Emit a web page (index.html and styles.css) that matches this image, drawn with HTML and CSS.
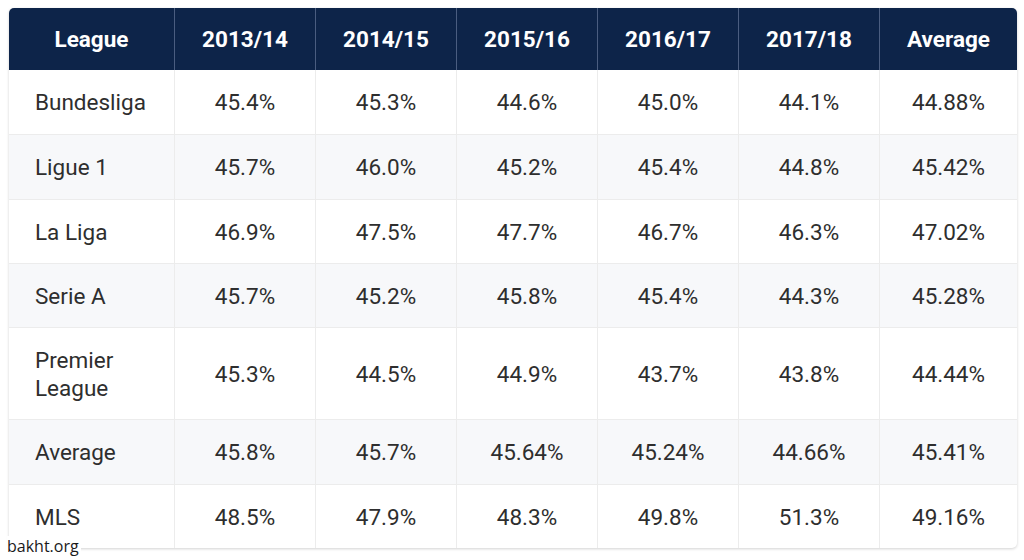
FILE: index.html
```html
<!DOCTYPE html>
<html>
<head>
<meta charset="utf-8">
<link rel="stylesheet" href="styles.css">
</head>
<body>
<div class="page">
  <table class="stats">
    <colgroup>
      <col class="c-league"><col class="c-year"><col class="c-year"><col class="c-year"><col class="c-year"><col class="c-year"><col class="c-avg">
    </colgroup>
    <thead>
      <tr>
        <th class="first">League</th><th>2013/14</th><th>2014/15</th><th>2015/16</th><th>2016/17</th><th>2017/18</th><th class="last">Average</th>
      </tr>
    </thead>
    <tbody>
      <tr class="r65"><td>Bundesliga</td><td>45.4%</td><td>45.3%</td><td>44.6%</td><td>45.0%</td><td>44.1%</td><td>44.88%</td></tr>
      <tr class="r65 alt"><td>Ligue 1</td><td>45.7%</td><td>46.0%</td><td>45.2%</td><td>45.4%</td><td>44.8%</td><td>45.42%</td></tr>
      <tr class="r64"><td>La Liga</td><td>46.9%</td><td>47.5%</td><td>47.7%</td><td>46.7%</td><td>46.3%</td><td>47.02%</td></tr>
      <tr class="r64 alt"><td>Serie A</td><td>45.7%</td><td>45.2%</td><td>45.8%</td><td>45.4%</td><td>44.3%</td><td>45.28%</td></tr>
      <tr class="r92"><td>Premier<br>League</td><td>45.3%</td><td>44.5%</td><td>44.9%</td><td>43.7%</td><td>43.8%</td><td>44.44%</td></tr>
      <tr class="r65 alt"><td>Average</td><td>45.8%</td><td>45.7%</td><td>45.64%</td><td>45.24%</td><td>44.66%</td><td>45.41%</td></tr>
      <tr class="r63"><td>MLS</td><td>48.5%</td><td>47.9%</td><td>48.3%</td><td>49.8%</td><td>51.3%</td><td>49.16%</td></tr>
    </tbody>
  </table>
  <div class="mark">bakht.org</div>
</div>
</body>
</html>
```
FILE: styles.css
```css
html, body {
  margin: 0;
  padding: 0;
  background: #ffffff;
}
.page {
  position: relative;
  width: 1024px;
  height: 560px;
  padding: 8px 0 0 9px;
  box-sizing: border-box;
}
.stats {
  width: 1008px;
  border-collapse: separate;
  border-spacing: 0;
  table-layout: fixed;
  font-family: Roboto, "Liberation Sans", sans-serif;
  font-size: 22.5px;
  color: #2e2e2e;
  border-radius: 5px;
  box-shadow: 0 1px 3px rgba(0,0,0,0.18);
}
.c-league { width: 166px; }
.c-year { width: 141px; }
.c-avg { width: 137px; }
.stats th {
  background: #0d2449;
  color: #ffffff;
  font-weight: 700;
  height: 62px;
  padding: 0;
  text-align: center;
  border-right: 1px solid #4a5d80;
  box-sizing: border-box;
}
.stats th.first { border-top-left-radius: 5px; }
.stats th.last { border-top-right-radius: 5px; border-right: none; }
.stats td {
  text-align: center;
  padding: 0;
  border-right: 1px solid #ececec;
  border-bottom: 1px solid #ececec;
  box-sizing: border-box;
  line-height: 28px;
}
.stats td:last-child { border-right: none; }
.stats td:first-child {
  text-align: left;
  padding-left: 26px;
}
.stats tr.alt td { background: #f7f8fa; }
.r65 td { height: 65px; }
.r64 td { height: 64px; }
.r92 td { height: 92px; }
.r63 td { height: 63px; }
.stats tbody tr:last-child td { border-bottom: none; }
.mark {
  position: absolute;
  left: 7px;
  top: 536px;
  font-family: "Open Sans", "DejaVu Sans", sans-serif;
  font-size: 16px;
  line-height: 21px;
  color: #1a1a1a;
  background: #ffffff;
  padding-right: 2px;
}
```
